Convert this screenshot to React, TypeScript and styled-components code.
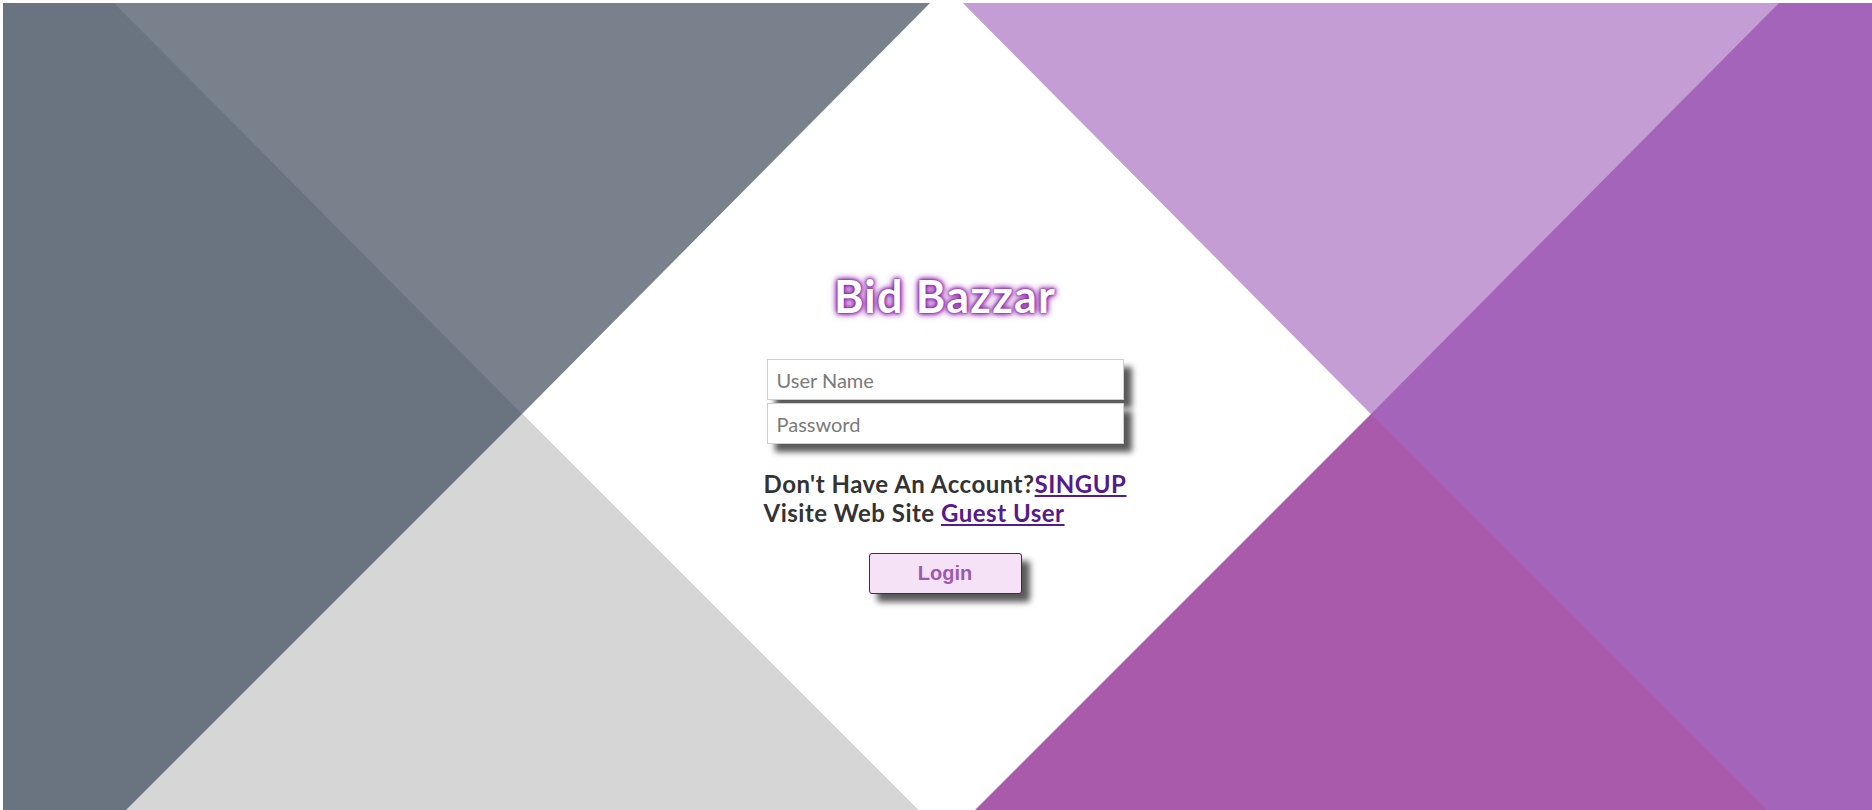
import React from "react";
import styled, { createGlobalStyle } from "styled-components";

const GlobalStyle = createGlobalStyle`
  html, body {
    margin: 0;
    padding: 0;
    background: #ffffff;
  }
  body {
    font-family: Lato, "Open Sans", Arial, sans-serif;
  }
  * { box-sizing: border-box; }
`;

const Page = styled.div`
  width: 1872px;
  height: 810px;
  display: grid;
  grid-template: 1fr / 1fr;
  overflow: hidden;
  background: #ffffff;
`;

const Backdrop = styled.svg`
  grid-area: 1 / 1;
  width: 1872px;
  height: 810px;
  display: block;
`;

const Stage = styled.div`
  grid-area: 1 / 1;
  display: flex;
  flex-direction: column;
  align-items: center;
  padding-top: 270px;
  padding-left: 18px;
`;

const Title = styled.h1`
  margin: 0;
  font-family: Lato, "Open Sans", sans-serif;
  font-weight: 700;
  font-size: 45px;
  line-height: 52px;
  color: #ffffff;
  letter-spacing: 1.2px;
  text-shadow: 0 0 2px #7b1fa2, 0 0 4px #8e24aa, 0 0 6px #8e24aa, 0 0 9px #ba68c8;
`;

const Form = styled.form`
  display: flex;
  flex-direction: column;
  align-items: center;
  margin-top: 37px;
`;

const Field = styled.input`
  width: 357px;
  height: 41px;
  margin: 0 0 3px 0;
  padding: 0 0 0 9px;
  border: 1px solid #cfcfcf;
  background: #ffffff;
  font-family: Lato, "Open Sans", sans-serif;
  font-size: 20px;
  color: #333;
  box-shadow: 8px 8px 6px #5a5a5a;
  outline: none;
  &::placeholder {
    color: #7a7a7a;
    font-weight: 400;
  }
`;

const Info = styled.div`
  margin-top: 22px;
  font-family: Lato, "Open Sans", sans-serif;
  font-weight: 700;
  font-size: 24px;
  line-height: 29px;
  letter-spacing: 0.5px;
  color: #333333;
  text-align: left;
`;

const Line = styled.div`
  white-space: nowrap;
`;

const Link = styled.a`
  color: #551a8b;
  text-decoration: underline;
  text-underline-offset: 2px;
  cursor: pointer;
`;

const LoginButton = styled.button`
  margin-top: 26px;
  width: 153px;
  height: 41px;
  border: 1px solid #800080;
  border-radius: 3px;
  background: #f5e2f7;
  color: #9b59b6;
  font-family: "Liberation Sans", Arial, sans-serif;
  font-weight: 700;
  font-size: 20px;
  box-shadow: 8px 8px 6px #5a5a5a;
  cursor: pointer;
`;

function Background() {
  return (
    <Backdrop viewBox="0 0 1872 810" preserveAspectRatio="none" aria-hidden="true">
      <rect x="0" y="0" width="1872" height="810" fill="#ffffff" />
      <rect x="3" y="3" width="945" height="807" fill="#6a7380" />
      <rect x="948" y="3" width="924" height="807" fill="#a464b9" />
      <polygon points="114,3 930,3 522,414" fill="#78818c" />
      <polygon points="522,414 918,810 126,810" fill="#d6d6d6" />
      <polygon points="963,3 1779,3 1371,414" fill="#c49dd5" />
      <polygon points="1371,414 1767,810 975,810" fill="#aa5aaa" />
      <polygon points="930,3 963,3 1371,414 975,810 918,810 522,414" fill="#ffffff" />
    </Backdrop>
  );
}

export default function App() {
  return (
    <>
      <GlobalStyle />
      <Page>
        <Background />
        <Stage>
          <Title>Bid Bazzar</Title>
          <Form onSubmit={(e) => e.preventDefault()}>
            <Field type="text" placeholder="User Name" />
            <Field type="password" placeholder="Password" />
            <Info>
              <Line>
                Don't Have An Account?<Link>SINGUP</Link>
              </Line>
              <Line>
                Visite Web Site <Link>Guest User</Link>
              </Line>
            </Info>
            <LoginButton type="submit">Login</LoginButton>
          </Form>
        </Stage>
      </Page>
    </>
  );
}
